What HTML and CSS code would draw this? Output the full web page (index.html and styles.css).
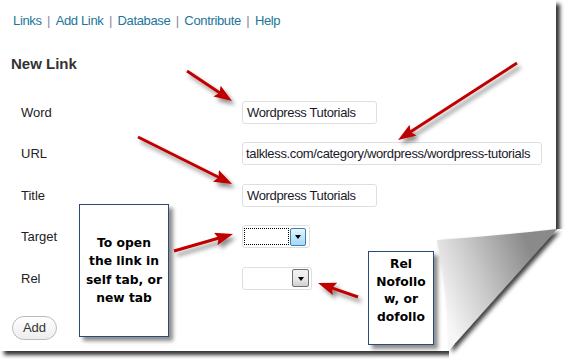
FILE: index.html
```html
<!DOCTYPE html>
<html>
<head>
<meta charset="utf-8">
<link rel="stylesheet" href="styles.css">
</head>
<body>
<div class="paper">
  <nav class="nav">
    <a>Links</a><span class="sep">|</span><a>Add Link</a><span class="sep">|</span><a>Database</a><span class="sep">|</span><a>Contribute</a><span class="sep">|</span><a>Help</a>
  </nav>
  <h2 class="title">New Link</h2>
  <div class="form">
    <div class="row"><span class="label">Word</span><span class="input w-short">Wordpress Tutorials</span></div>
    <div class="row"><span class="label">URL</span><span class="input w-long">talkless.com/category/wordpress/wordpress-tutorials</span></div>
    <div class="row"><span class="label">Title</span><span class="input w-short">Wordpress Tutorials</span></div>
    <div class="row"><span class="label">Target</span>
      <span class="select sel-target"><span class="focus"></span><span class="dd dd-hot"><span class="tri"></span></span></span>
    </div>
    <div class="row"><span class="label">Rel</span>
      <span class="select sel-rel"><span class="dd dd-plain"><span class="tri"></span></span></span>
    </div>
  </div>
  <button class="add">Add</button>
</div>

<div class="callout callout-target">To open<br>the link in<br>self tab, or<br>new tab</div>
<div class="callout callout-rel">Rel<br>Nofollo<br>w, or<br>dofollo</div>

<svg class="overlay" width="568" height="359" viewBox="0 0 568 359">
  <defs>
    <filter id="ash" x="-30%" y="-30%" width="160%" height="160%">
      <feDropShadow dx="3" dy="4" stdDeviation="2" flood-color="#000" flood-opacity="0.45"/>
    </filter>
    <filter id="csh" x="-20%" y="-20%" width="150%" height="150%">
      <feDropShadow dx="3" dy="3" stdDeviation="2.2" flood-color="#000" flood-opacity="0.75"/>
    </filter>
    <linearGradient id="cg" gradientUnits="userSpaceOnUse" x1="440" y1="300" x2="535" y2="262">
      <stop offset="0" stop-color="#f6f6f6"/>
      <stop offset="0.45" stop-color="#c8c8c8"/>
      <stop offset="1" stop-color="#8a8a8a"/>
    </linearGradient>
    <marker id="head" markerUnits="userSpaceOnUse" markerWidth="20" markerHeight="14" refX="8" refY="6.5" orient="auto">
      <path d="M0,0 L18,6.5 L0,13 L3,6.5 Z" fill="#c00000"/>
    </marker>
  </defs>
  <polygon points="557,229 570,229 570,360 449,360 449,350" fill="#fff"/>
  <path d="M437,240 Q497,236 557,229 L449,350 Q450,305 437,240 Z" fill="url(#cg)" filter="url(#csh)"/>
  <g filter="url(#ash)" stroke="#c00000" stroke-width="3" fill="none">
    <line x1="187" y1="71" x2="223.7" y2="95.5" marker-end="url(#head)"/>
    <line x1="138" y1="137" x2="223.1" y2="179.5" marker-end="url(#head)"/>
    <line x1="517" y1="63" x2="406.4" y2="134.6" marker-end="url(#head)"/>
    <line x1="174" y1="251" x2="223.4" y2="236.8" marker-end="url(#head)"/>
    <line x1="358" y1="297" x2="327.4" y2="286.3" marker-end="url(#head)"/>
  </g>
</svg>
</body>
</html>
```
FILE: styles.css
```css
html, body {
  margin: 0;
  padding: 0;
  background: #fff;
}
body {
  width: 568px;
  height: 359px;
  overflow: hidden;
  position: relative;
  font-family: "Liberation Sans", Arial, sans-serif;
  font-size: 13px;
  color: #222;
}
.paper {
  width: 556px;
  height: 351px;
  background: #fff;
  box-shadow: 4px 4px 4px rgba(0, 0, 0, 0.8);
  padding-top: 13px;
  box-sizing: border-box;
}
.nav {
  display: flex;
  padding-left: 13px;
  line-height: 16px;
  height: 16px;
  letter-spacing: -0.35px;
}
.nav a {
  color: #21759b;
}
.sep {
  color: #8a86a0;
  margin: 0 5.5px;
}
.title {
  margin: 25.5px 0 0 11px;
  font-size: 15px;
  line-height: 18px;
  font-weight: bold;
  color: #333;
}
.form {
  margin-top: 19px;
  padding-left: 21px;
}
.row {
  display: flex;
  align-items: center;
  height: 41.5px;
}
.label {
  width: 221px;
  color: #222;
}
.input {
  box-sizing: border-box;
  height: 23px;
  line-height: 21px;
  border: 1px solid #dfdfdf;
  border-radius: 3px;
  padding-left: 4px;
  color: #1a1a2a;
  white-space: nowrap;
  overflow: hidden;
  letter-spacing: -0.35px;
}
.w-short { width: 135px; }
.w-long { width: 300px; padding-left: 3px; }
.select {
  box-sizing: border-box;
  height: 23px;
  border: 1px solid #dfdfdf;
  border-radius: 3px;
  display: flex;
  align-items: center;
}
.sel-target {
  width: 68px;
  padding: 0 3px 0 1px;
  gap: 1px;
}
.sel-rel {
  width: 70px;
  justify-content: flex-end;
  padding-right: 2px;
}
.focus {
  box-sizing: border-box;
  width: 45px;
  height: 17px;
  border: 1px dotted #000;
}
.dd {
  box-sizing: border-box;
  width: 16px;
  height: 18px;
  border-radius: 2px;
  display: flex;
  align-items: center;
  justify-content: center;
}
.dd-hot {
  border: 1px solid #3c7fb1;
  background: linear-gradient(#eaf6fd, #bee6fd 50%, #a7d9f5);
}
.dd-plain {
  width: 17px;
  border: 1px solid #707070;
  background: linear-gradient(#f2f2f2, #ebebeb 50%, #cfcfcf);
}
.tri {
  width: 0;
  height: 0;
  border-left: 3.5px solid transparent;
  border-right: 3.5px solid transparent;
  border-top: 4px solid #000;
  margin-top: 1px;
}
.add {
  display: block;
  margin: 16.75px 0 0 12px;
  box-sizing: border-box;
  width: 45px;
  height: 24px;
  border: 1px solid #bbb;
  border-radius: 12px;
  background: linear-gradient(#fff, #ededed);
  font-family: "Liberation Sans", Arial, sans-serif;
  font-size: 13px;
  color: #333;
  padding: 0;
}
.callout {
  position: absolute;
  box-sizing: border-box;
  background: #fff;
  border: 1.5px solid #2a4a7a;
  box-shadow: 4px 4px 4px rgba(0, 0, 0, 0.45);
  font-family: "DejaVu Sans", sans-serif;
  font-weight: bold;
  font-size: 12.3px;
  line-height: 18.3px;
  color: #000;
  text-align: center;
  display: flex;
  flex-direction: column;
}
.callout-target {
  left: 79px;
  top: 204px;
  width: 90px;
  height: 133px;
  justify-content: center;
}
.callout-rel {
  left: 368px;
  top: 251px;
  width: 66px;
  height: 94px;
  padding-top: 4px;
  line-height: 17.7px;
}
.overlay {
  position: absolute;
  left: 0;
  top: 0;
  pointer-events: none;
}
```
